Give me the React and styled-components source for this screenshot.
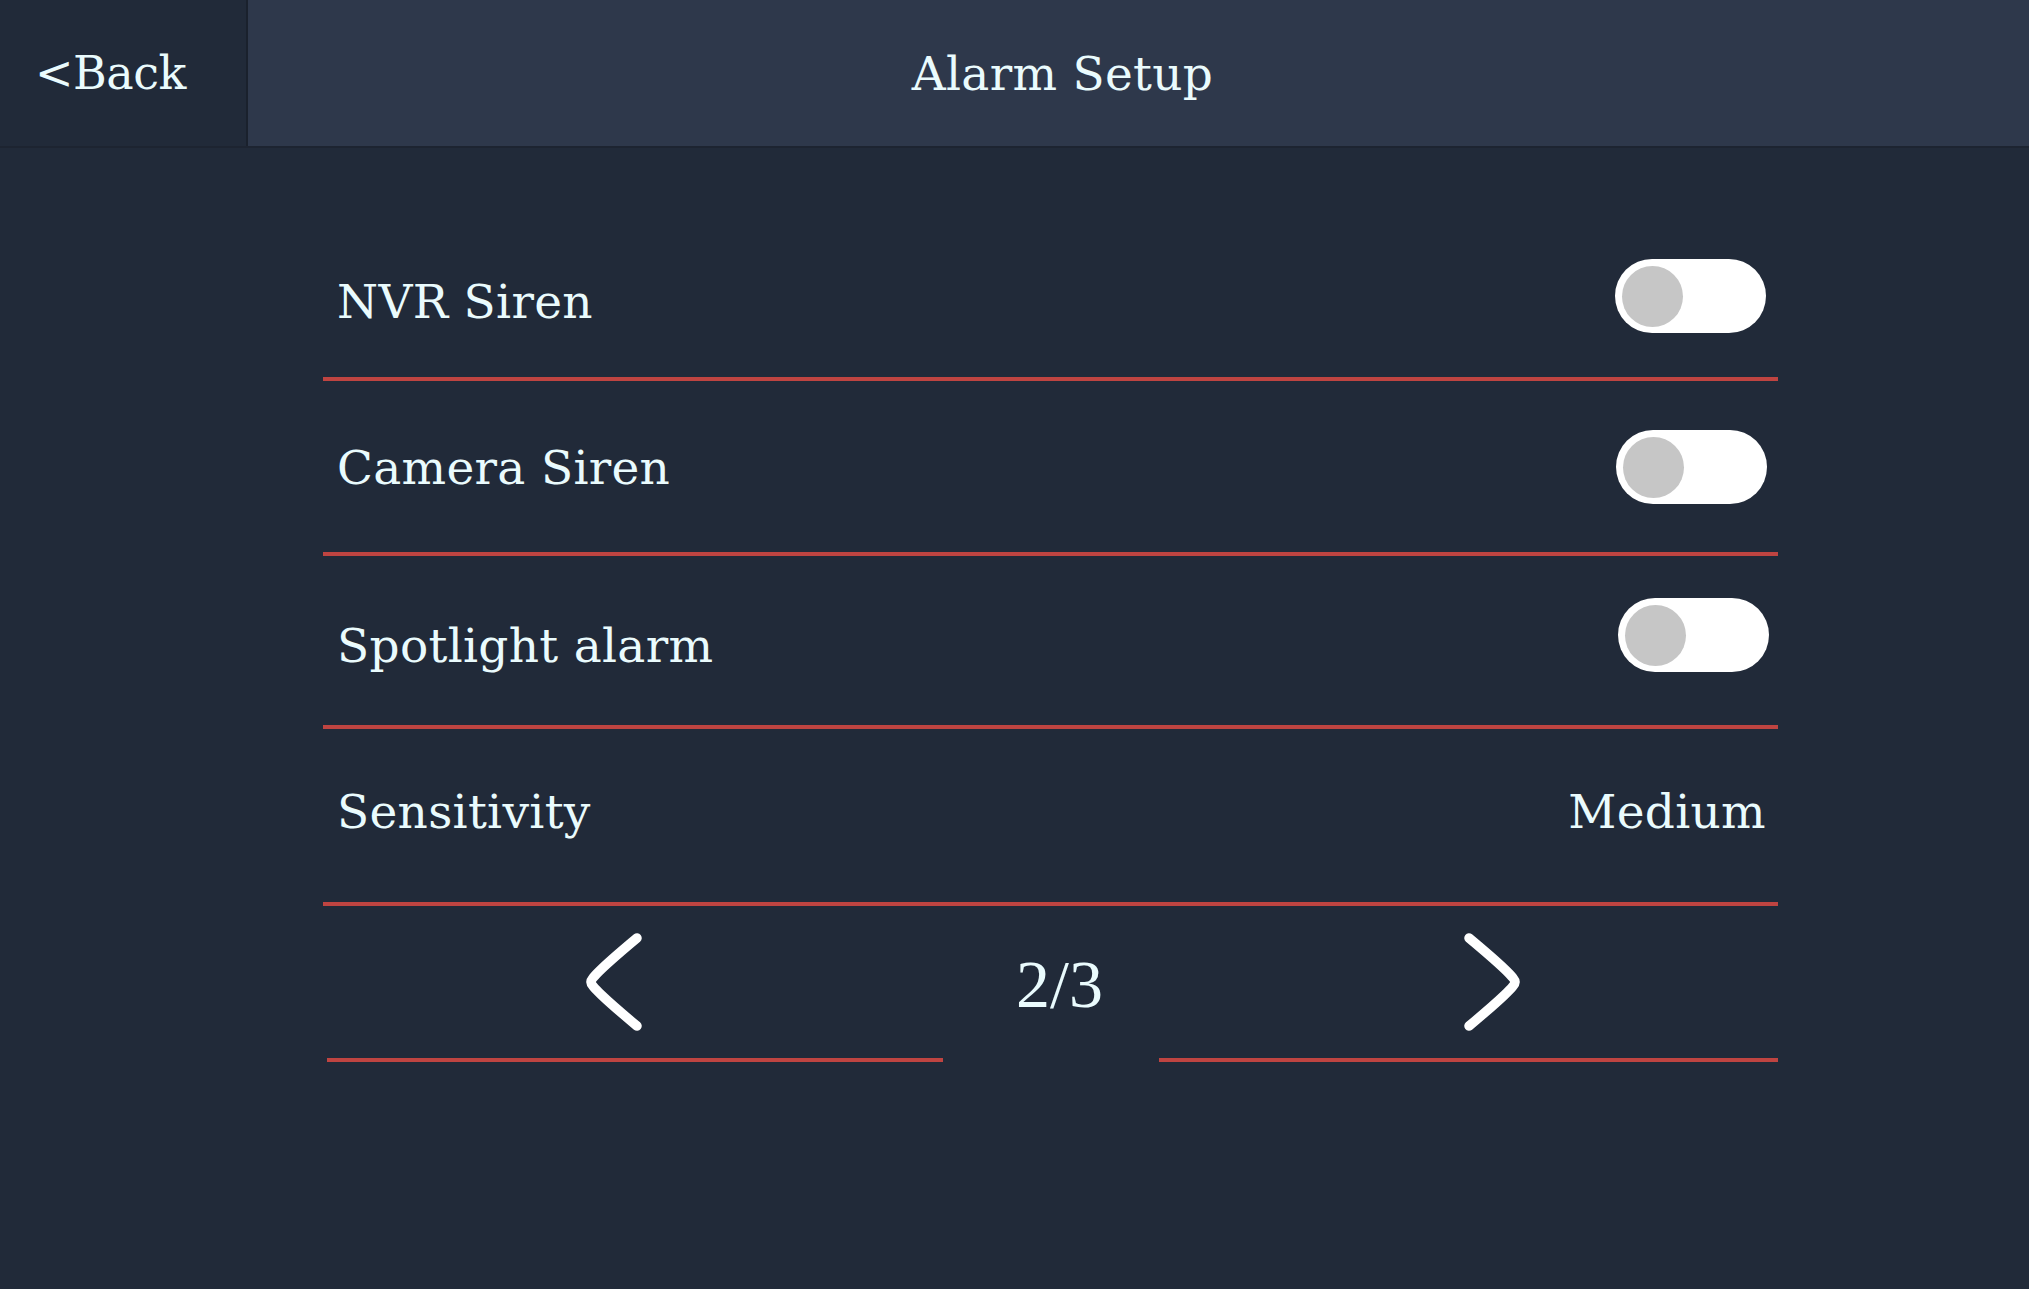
import React from "react";
import styled, { createGlobalStyle } from "styled-components";

const GlobalStyle = createGlobalStyle`
  html, body {
    margin: 0;
    padding: 0;
    background: #212a39;
  }
  body {
    font-family: "DejaVu Serif", "Liberation Serif", serif;
    color: #eafbfd;
  }
  * { box-sizing: border-box; }
`;

const Page = styled.div`
  width: 2029px;
  height: 1289px;
  background: #212a39;
  overflow: hidden;
`;

const Header = styled.header`
  display: flex;
  height: 148px;
  background: #2e384b;
  border-bottom: 2px solid #1d2431;
`;

const BackButton = styled.div`
  width: 248px;
  display: flex;
  align-items: center;
  padding-left: 35px;
  background: #212a39;
  border-right: 2px solid #1a212d;
  font-size: 46px;
  color: #eafbfd;
  letter-spacing: -0.5px;
`;

const Title = styled.h1`
  flex: 1;
  margin: 0;
  display: flex;
  align-items: center;
  justify-content: center;
  padding-right: 152px;
  font-size: 47px;
  font-weight: normal;
  color: #eafbfd;
  letter-spacing: 0.3px;
`;

const Content = styled.main`
  width: 1455px;
  margin-left: 323px;
  padding-top: 56px;
`;

const Row = styled.div`
  height: ${(p) => p.$h}px;
  display: flex;
  align-items: center;
  justify-content: space-between;
  padding: ${(p) => Math.max(p.$shift, 0)}px 12px ${(p) => Math.max(-p.$shift, 0)}px 14px;
  border-bottom: 4px solid #bf4441;
`;

const Label = styled.span`
  font-size: 47px;
  letter-spacing: 0.3px;
  color: #eafbfd;
  margin-top: ${(p) => (p.$drop || 0) * 2}px;
`;

const Value = styled.span`
  font-size: 47px;
  letter-spacing: 0.3px;
  color: #eafbfd;
`;

const Track = styled.div`
  width: 151px;
  height: 74px;
  border-radius: 37px;
  background: #ffffff;
  display: flex;
  align-items: center;
  padding-left: 7px;
  margin-right: ${(p) => p.$shift || 0}px;
`;

const Knob = styled.div`
  width: 61px;
  height: 61px;
  border-radius: 50%;
  background: #c6c6c6;
`;

const Pager = styled.nav`
  display: grid;
  grid-template-columns: 1fr 216px 1fr;
  height: 156px;
`;

const PagerCell = styled.div`
  display: flex;
  align-items: center;
  justify-content: center;
  margin-left: ${(p) => p.$inset || 0}px;
  border-bottom: ${(p) => (p.$line ? "4px solid #bf4441" : "none")};
  padding-bottom: ${(p) => (p.$line ? "0" : "4px")};
`;

const PageCount = styled.span`
  font-family: "Liberation Serif", "Times New Roman", serif;
  font-size: 68px;
  color: #eafbfd;
  margin: 4px 0 0 18px;
`;

const ChevronSvg = styled.svg`
  margin-left: ${(p) => p.$nudge || 0}px;
`;

const Chevron = ({ dir, nudge }) => (
  <ChevronSvg width="100" height="100" viewBox="0 0 100 100" fill="none" $nudge={nudge}>
    <path
      d={dir === "left" ? "M54 6 Q 6 46 8 50 Q 6 54 54 94" : "M46 6 Q 94 46 92 50 Q 94 54 46 94"}
      stroke="#ffffff"
      strokeWidth="9.5"
      strokeLinecap="round"
      strokeLinejoin="round"
    />
  </ChevronSvg>
);

const Toggle = ({ shift }) => (
  <Track $shift={shift}>
    <Knob />
  </Track>
);

export default function App() {
  return (
    <Page>
      <GlobalStyle />
      <Header>
        <BackButton>&lt;Back</BackButton>
        <Title>Alarm Setup</Title>
      </Header>
      <Content>
        <Row $h={177} $shift={11}>
          <Label $drop={5}>NVR Siren</Label>
          <Toggle shift={0} />
        </Row>
        <Row $h={175} $shift={1}>
          <Label>Camera Siren</Label>
          <Toggle shift={-1} />
        </Row>
        <Row $h={173} $shift={-11}>
          <Label $drop={10}>Spotlight alarm</Label>
          <Toggle shift={-3} />
        </Row>
        <Row $h={177} $shift={-9}>
          <Label>Sensitivity</Label>
          <Value>Medium</Value>
        </Row>
        <Pager>
          <PagerCell $line $inset={4}>
            <Chevron dir="left" nudge={-4} />
          </PagerCell>
          <PagerCell>
            <PageCount>2/3</PageCount>
          </PagerCell>
          <PagerCell $line>
            <Chevron dir="right" nudge={10} />
          </PagerCell>
        </Pager>
      </Content>
    </Page>
  );
}
